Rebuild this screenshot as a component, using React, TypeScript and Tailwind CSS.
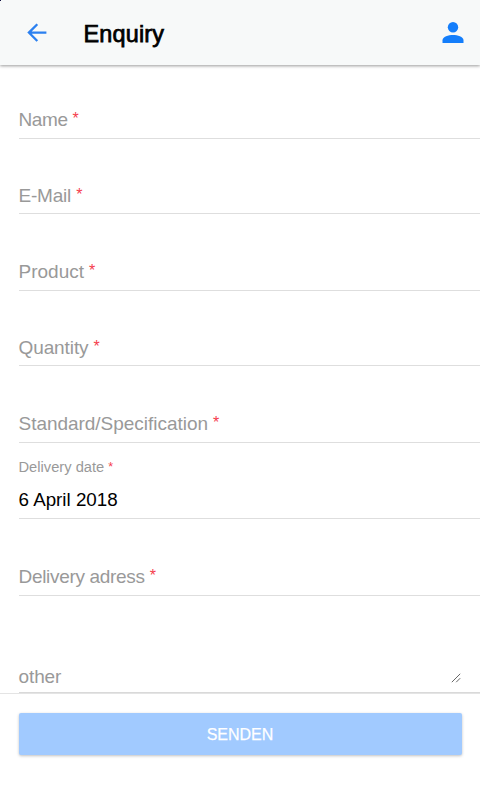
import React, { useState } from "react";

type Field = {
  key: string;
  label: string;
  className: string;
  value?: string;
};

const fields: Field[] = [
  { key: "name", label: "Name", className: "h-[74px] pb-[5px] tracking-[-0.4px]" },
  { key: "email", label: "E-Mail", className: "h-[75px] pb-[4px] tracking-[-0.2px]" },
  { key: "product", label: "Product", className: "h-[77px] pb-[5px]" },
  { key: "quantity", label: "Quantity", className: "h-[75px] pb-[4px] tracking-[-0.1px]" },
  { key: "specification", label: "Standard/Specification", className: "h-[77px] pb-[5px] tracking-[-0.03px]" },
  { key: "deliveryDate", label: "Delivery date", className: "h-[76px] pb-[6px]", value: "6 April 2018" },
  { key: "deliveryAddress", label: "Delivery adress", className: "h-[77px] pb-[5px] tracking-[-0.32px]" },
];

const Required: React.FC<{ small?: boolean }> = ({ small }) => (
  <span
    className={`relative text-[#f53d4d] ${
      small ? "-top-px ml-[4px] text-[12.5px]" : "-top-[2px] ml-[5px] text-[16px]"
    }`}
  >
    *
  </span>
);

const BackIcon: React.FC = () => (
  <svg width="20" height="20" viewBox="0 0 20 20" fill="none">
    <path d="M10.3 1.2 1.9 9.6l8.4 8.4M2 9.6h17.4" stroke="#2b80f0" strokeWidth="2.3" />
  </svg>
);

const PersonIcon: React.FC = () => (
  <svg width="22" height="22" viewBox="0 0 22 22" fill="#147efb">
    <circle cx="11" cy="5.3" r="5.2" />
    <path d="M0.5 21v-2.6c0-3.5 6-5.3 10.5-5.3s10.5 1.8 10.5 5.3V21z" />
  </svg>
);

const FormRow: React.FC<{ field: Field }> = ({ field }) => (
  <label className={`flex flex-col justify-end border-b border-[#dedede] ${field.className}`}>
    {field.value ? (
      <>
        <span className="mb-[12px] text-[14.7px] leading-[16px] text-[#999]">
          {field.label}
          <Required small />
        </span>
        <span className="text-[18.8px] leading-6 text-black">{field.value}</span>
      </>
    ) : (
      <span className="text-[19px] leading-6 text-[#999]">
        {field.label}
        <Required />
      </span>
    )}
  </label>
);

const App: React.FC = () => {
  const [other, setOther] = useState("");

  return (
    <div className="relative flex h-[800px] w-[480px] flex-col overflow-hidden bg-white font-['Liberation_Sans',Arial,sans-serif]">
      <span className="absolute top-0 left-0 z-20 size-px bg-[#101040]" />
      <header className="z-10 flex h-[65px] shrink-0 items-center bg-[#f7f9f9] pr-[16px] pl-[27px] shadow-[0_1px_3px_rgba(0,0,0,0.4)]">
        <button type="button" aria-label="Back">
          <BackIcon />
        </button>
        <h1 className="ml-[36.5px] flex-1 pt-[3px] text-[23.4px] leading-8 tracking-[0.2px] text-black [-webkit-text-stroke:0.75px_black]">
          Enquiry
        </h1>
        <button type="button" aria-label="Profile">
          <PersonIcon />
        </button>
      </header>

      <form className="flex flex-1 flex-col" onSubmit={(e) => e.preventDefault()}>
        <div className="pl-[18.5px]">
          {fields.map((field) => (
            <FormRow key={field.key} field={field} />
          ))}
        </div>

        {/* Free text */}
        <div className="h-[98px] border-b border-[#e4e4e4] pl-[18.5px]">
          <label className="flex h-full items-end border-b border-[#d9d9d9] pb-[3px] text-[19px] leading-6 text-[#999]">
            <span className="flex-1 tracking-[-0.1px]">other</span>
            <textarea
              name="other"
              value={other}
              onChange={(e) => setOther(e.target.value)}
              className="hidden"
            />
            <svg width="10" height="10" viewBox="0 0 10 10" className="mr-[19px] mb-[6px]">
              <path d="M0.8 9.2 9.2 0.8M5.2 9.2l4-4" stroke="#666" strokeWidth="1" />
            </svg>
          </label>
        </div>

        <div className="px-[18.5px] pt-[19px]">
          <button
            type="submit"
            disabled
            className="h-[42px] w-full rounded-[2px] bg-[#a1caff] pt-px text-[16px] text-white shadow-[0_1px_3px_rgba(0,0,0,0.25)] [-webkit-text-stroke:0.25px_white]"
          >
            SENDEN
          </button>
        </div>
      </form>
    </div>
  );
};

export default App;
